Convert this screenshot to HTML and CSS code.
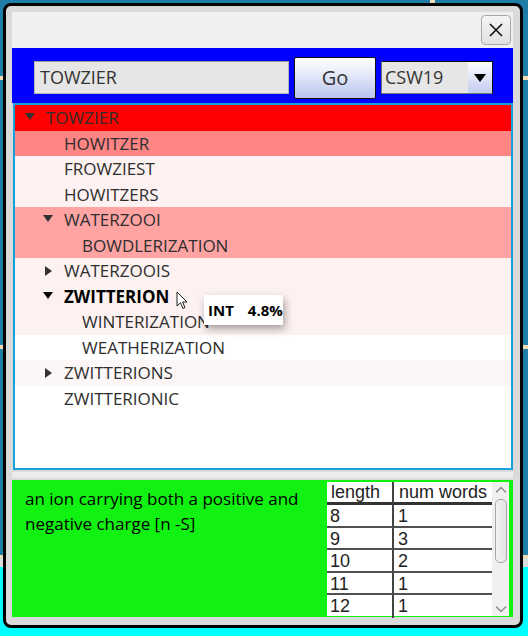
FILE: index.html
```html
<!DOCTYPE html>
<html>
<head>
<meta charset="utf-8">
<link rel="stylesheet" href="styles.css">
</head>
<body>
<div class="desk">
  <span class="mark mark-top"></span>
  <span class="mark mark-left"></span>
  <span class="mark mark-right"></span>
  <span class="mark mark-left2"></span>
  <span class="mark mark-right2"></span>
  <div class="window">
    <div class="titlebar">
      <div class="close">
        <svg width="16" height="16" viewBox="0 0 16 16"><path d="M2 2 L14 14 M14 2 L2 14" stroke="#111" stroke-width="1.6" fill="none"/></svg>
      </div>
    </div>
    <div class="toolbar">
      <div class="field">TOWZIER</div>
      <div class="go">Go</div>
      <div class="combo">
        <span class="combo-text">CSW19</span>
        <span class="combo-btn"><svg width="12" height="8" viewBox="0 0 12 8"><path d="M0 0 L12 0 L6 8 Z" fill="#000"/></svg></span>
      </div>
    </div>
    <div class="tree">
      <div class="row bg-red lvl0"><span class="tog"><span class="tri-down"></span></span><span class="lbl">TOWZIER</span></div>
      <div class="row bg-mid lvl1"><span class="tog"></span><span class="lbl">HOWITZER</span></div>
      <div class="row bg-pale lvl1"><span class="tog"></span><span class="lbl">FROWZIEST</span></div>
      <div class="row bg-pale lvl1"><span class="tog"></span><span class="lbl">HOWITZERS</span></div>
      <div class="row bg-soft lvl1"><span class="tog"><span class="tri-down"></span></span><span class="lbl">WATERZOOI</span></div>
      <div class="row bg-soft lvl2"><span class="tog"></span><span class="lbl">BOWDLERIZATION</span></div>
      <div class="row bg-pale lvl1"><span class="tog"><span class="tri-right"></span></span><span class="lbl">WATERZOOIS</span></div>
      <div class="row bg-pale lvl1 bold"><span class="tog"><span class="tri-down dark"></span></span><span class="lbl">ZWITTERION</span></div>
      <div class="row bg-pale lvl2"><span class="tog"></span><span class="lbl">WINTERIZATION</span></div>
      <div class="row lvl2"><span class="tog"></span><span class="lbl">WEATHERIZATION</span></div>
      <div class="row bg-faint lvl1"><span class="tog"><span class="tri-right"></span></span><span class="lbl">ZWITTERIONS</span></div>
      <div class="row lvl1"><span class="tog"></span><span class="lbl">ZWITTERIONIC</span></div>
      <div class="tooltip"><span>INT</span><span>4.8%</span></div>
      <svg class="cursor" width="13" height="19" viewBox="0 0 13 19"><path d="M1 1 L1 15 L4.5 11.8 L7 17.5 L9 16.6 L6.6 11 L11 11 Z" fill="#fff" stroke="#222" stroke-width="1" stroke-linejoin="round"/></svg>
    </div>
    <div class="sep"></div>
    <div class="info">
      <p class="def">an ion carrying both a positive and negative charge [n -S]</p>
      <div class="tablebox">
        <div class="counts">
          <div class="cell head c1">length</div><div class="cell head c2">num words</div>
          <div class="cell c1">8</div><div class="cell c2">1</div>
          <div class="cell c1">9</div><div class="cell c2">3</div>
          <div class="cell c1">10</div><div class="cell c2">2</div>
          <div class="cell c1">11</div><div class="cell c2">1</div>
          <div class="cell c1 last">12</div><div class="cell c2 last">1</div>
        </div>
        <div class="scrollbar">
          <svg class="chev" width="12" height="8" viewBox="0 0 12 8"><path d="M1 6.5 L6 1.5 L11 6.5" stroke="#8a8a8a" stroke-width="1.3" fill="none"/></svg>
          <div class="thumb"></div>
          <svg class="chev chev-down" width="12" height="8" viewBox="0 0 12 8"><path d="M1 1.5 L6 6.5 L11 1.5" stroke="#8a8a8a" stroke-width="1.3" fill="none"/></svg>
        </div>
      </div>
    </div>
  </div>
</div>
</body>
</html>
```
FILE: styles.css
```css
* { box-sizing: border-box; }
html, body { margin: 0; padding: 0; }
body {
  width: 528px;
  height: 636px;
  overflow: hidden;
  font-family: "Open Sans", "Noto Sans", sans-serif;
}
.desk {
  position: relative;
  width: 528px;
  height: 636px;
  padding: 3px 0 0 3px;
  background: linear-gradient(to bottom, #1f7ea6 0, #1f7ea6 555px, #f2dcb4 555px, #f2dcb4 558px, #d8dde0 558px, #d8dde0 567px, #00ffff 567px);
}
.mark { position: absolute; background: #f2dcb4; }
.mark-top { left: 430px; top: 0; width: 5px; height: 3px; }
.mark-left { left: 0; top: 76px; width: 3px; height: 4px; }
.mark-right { left: 523px; top: 76px; width: 5px; height: 4px; }
.mark-left2 { left: 0; top: 345px; width: 3px; height: 4px; }
.mark-right2 { left: 523px; top: 345px; width: 5px; height: 4px; }

.window {
  width: 520px;
  height: 625px;
  border: 3px solid #000;
  border-radius: 8px;
  background: #dadada;
  padding: 6px 7px 5px 6px;
  display: flex;
  flex-direction: column;
}
.titlebar {
  height: 36px;
  background: #f0f0f0;
  display: flex;
  justify-content: flex-end;
  align-items: flex-start;
  padding: 3px 2px 0 0;
}
.close {
  width: 30px;
  height: 30px;
  border: 1px solid #a8a8a8;
  border-radius: 4px;
  background: linear-gradient(#f4f4f4, #e2e2e2);
  display: flex;
  align-items: center;
  justify-content: center;
}
.toolbar {
  height: 55px;
  background: #0000ff;
  display: flex;
  align-items: center;
  padding: 4px 0 0 22px;
  gap: 5px;
}
.field {
  width: 255px;
  height: 33px;
  background: #e6e6e6;
  border: 1px solid #b4b4b4;
  border-top-color: #9a9a9a;
  font-size: 18px;
  color: #333;
  padding-left: 5px;
  line-height: 30px;
}
.go {
  width: 82px;
  height: 42px;
  border: 1px solid #111;
  border-radius: 2px;
  background: linear-gradient(#ffffff, #eef0fb 30%, #b7c3ee);
  font-size: 20px;
  color: #333;
  text-align: center;
  line-height: 39px;
}
.combo {
  width: 112px;
  height: 33px;
  background: #e6e6e6;
  border: 1px solid #111;
  border-left-color: #777;
  border-bottom-color: #777;
  display: flex;
}
.combo-text {
  flex: 1;
  font-size: 18px;
  color: #333;
  padding-left: 3px;
  line-height: 30px;
}
.combo-btn {
  width: 24px;
  background: linear-gradient(#ffffff, #c2cbf0);
  display: flex;
  align-items: center;
  justify-content: center;
}

.tree {
  position: relative;
  height: 367px;
  margin-left: 1px;
  background: #fff;
  border: 2px solid #16a0dc;
  overflow: hidden;
}
.row {
  height: 25.5px;
  display: flex;
  align-items: center;
  font-size: 17px;
  line-height: 25.5px;
  color: #2e2e2e;
  white-space: nowrap;
}
.bg-red { background: #ff0000; }
.bg-mid { background: #ff8484; }
.bg-soft { background: #ffa3a3; }
.bg-pale { background: #fdf2f1; }
.bg-faint { background: #fdf6f6; }
.lvl0 { padding-left: 10px; }
.lvl1 { padding-left: 28px; }
.lvl2 { padding-left: 46px; }
.tog {
  width: 21px;
  height: 25px;
  display: flex;
  align-items: center;
}
.tri-down {
  width: 0; height: 0;
  border-left: 5.5px solid transparent;
  border-right: 5.5px solid transparent;
  border-top: 7px solid #333;
  margin-top: -2px;
}
.tri-down.dark { border-top-color: #000; }
.tri-right {
  width: 0; height: 0;
  border-top: 5.5px solid transparent;
  border-bottom: 5.5px solid transparent;
  border-left: 7px solid #333;
  margin-left: 2px;
}
.bold .lbl { font-weight: 700; color: #000; }

.tooltip {
  position: absolute;
  left: 189px;
  top: 190px;
  width: 79px;
  height: 30px;
  background: #fff;
  box-shadow: 2px 4px 8px rgba(0,0,0,0.35);
  display: flex;
  gap: 14px;
  align-items: center;
  padding-left: 4px;
  font-size: 15px;
  font-weight: 700;
  color: #000;
}
.cursor {
  position: absolute;
  left: 161px;
  top: 186px;
}

.sep {
  height: 10px;
  background: linear-gradient(#dadada 0, #dadada 2px, #ececec 2px, #ececec 8px, #dadada 8px);
}
.info {
  height: 137px;
  background: #12f212;
  display: flex;
  padding: 2px 4px 1px 0;
}
.def {
  flex: 1;
  margin: 0;
  padding: 4px 0 0 13px;
  font-size: 17px;
  line-height: 25px;
  color: #000;
}
.tablebox {
  display: flex;
  background: #fff;
}
.counts {
  display: grid;
  grid-template-columns: 67px 98px;
  grid-auto-rows: 22.5px;
  grid-template-rows: 23px;
  font-family: "Liberation Sans", Arial, sans-serif;
  font-size: 18px;
  color: #222;
  background: #fff;
  align-content: start;
}
.cell {
  padding: 1px 0 0 3px;
  line-height: 20px;
  border-bottom: 2px solid #505050;
  white-space: nowrap;
}
.cell.c1 { border-right: 2px solid #444; }
.cell.c2 { padding-left: 4px; }
.cell.head { border-bottom: 3px solid #333; padding-top: 0; padding-left: 4px; }
.cell.head.c2 { padding-left: 5px; }
.cell.last { border-bottom: none; }
.scrollbar {
  width: 17px;
  background: #f0f0f0;
  display: flex;
  flex-direction: column;
  align-items: center;
  padding-top: 4px;
}
.chev { display: block; }
.thumb {
  width: 12px;
  height: 64px;
  margin-top: 5px;
  border: 1px solid #a8a8a8;
  border-radius: 5px;
  background: linear-gradient(to right, #f2f2f2, #e2e2e2);
}
.chev-down { margin-top: auto; margin-bottom: 3px; }
```
